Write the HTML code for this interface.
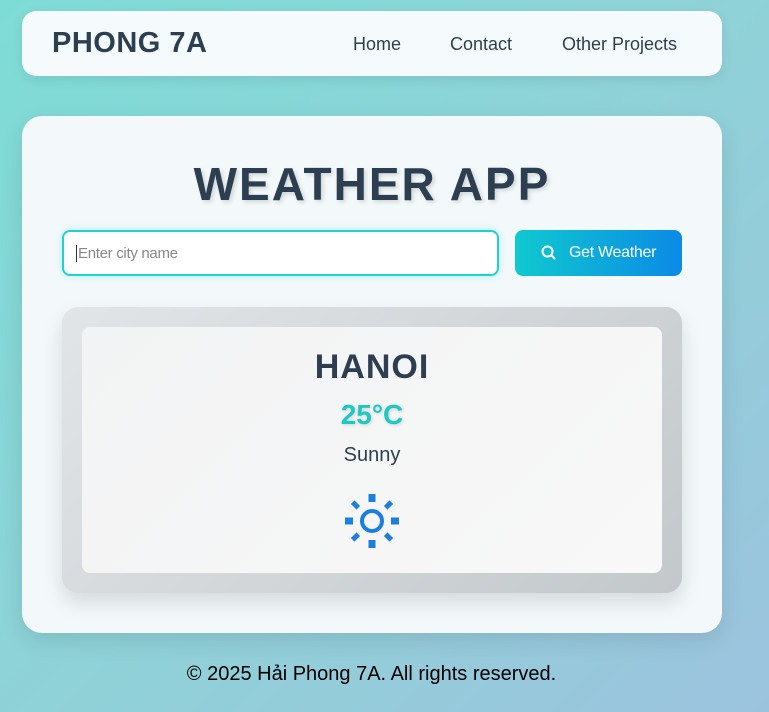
<!DOCTYPE html>
<html><head><meta charset="utf-8"><style>
*{box-sizing:border-box;margin:0;padding:0}
body{width:769px;height:712px;overflow:hidden;font-family:"Liberation Sans",Arial,sans-serif;background:linear-gradient(135deg,#7edcd6 0%,#8fd2d8 50%,#9cc3de 100%);position:relative}
.hdr{position:absolute;left:22px;top:11px;width:700px;height:65px;background:#f5fbfc;border-radius:14px;box-shadow:0 4px 12px rgba(0,0,0,.08)}
.logo{position:absolute;left:30px;top:16px;font-size:29px;font-weight:bold;color:#2c3e50;letter-spacing:.5px}
.nav{position:absolute;top:23px;font-size:18px;color:#2c3e50}
.card{position:absolute;left:22px;top:116px;width:700px;height:517px;background:#f3f9fb;border-radius:20px;box-shadow:0 8px 24px rgba(0,0,0,.1)}
h1{position:absolute;left:0;width:700px;top:41px;text-align:center;font-size:46px;font-weight:bold;color:#2c3e50;letter-spacing:2px;text-shadow:2px 2px 4px rgba(0,0,0,.15)}
.inp{position:absolute;left:40px;top:114px;width:437px;height:46px;border:2px solid #1dd3cf;border-radius:8px;background:#fff;box-shadow:0 0 8px rgba(29,211,207,.3)}
.inp span{position:absolute;left:12px;top:13px;font-size:15px;color:#888;border-left:1px solid #333;padding-left:1px;letter-spacing:-.3px}
.btn{position:absolute;left:493px;top:114px;width:167px;height:46px;border-radius:8px;background:linear-gradient(90deg,#10c9cf,#0b8ae6);color:#fff;font-size:16px}
.btn svg{position:absolute;left:26px;top:15px}
.btn span{position:absolute;left:54px;top:14px;letter-spacing:-.3px}
.res{position:absolute;left:40px;top:191px;width:620px;height:286px;border-radius:16px;background:linear-gradient(135deg,#e2e5e8,#c3c8cb);box-shadow:0 10px 20px rgba(0,0,0,.12)}
.in{position:absolute;left:20px;top:20px;width:580px;height:246px;border-radius:8px;background:linear-gradient(135deg,#f2f3f4,#f8f8f8)}
.c{position:absolute;left:0;width:580px;text-align:center}
.ft{position:absolute;left:0;width:743px;top:663px;text-align:center;font-size:20px;color:#000}
</style></head><body>
<div class="hdr"><div class="logo">PHONG 7A</div>
<div class="nav" style="left:331px">Home</div>
<div class="nav" style="left:428px">Contact</div>
<div class="nav" style="left:540px">Other Projects</div></div>
<div class="card"><h1>WEATHER APP</h1>
<div class="inp"><span>Enter city name</span></div>
<div class="btn"><svg width="16" height="16" viewBox="0 0 16 16"><circle cx="6.5" cy="6.5" r="5" fill="none" stroke="#fff" stroke-width="2"/><line x1="10" y1="10" x2="14" y2="14" stroke="#fff" stroke-width="2"/></svg><span>Get Weather</span></div>
<div class="res"><div class="in">
<div class="c" style="top:21px;font-size:34px;font-weight:bold;color:#2c3e50;letter-spacing:1px">HANOI</div>
<div class="c" style="top:72px;font-size:28px;font-weight:bold;color:#1ec9c4;text-shadow:1px 1px 3px rgba(0,0,0,.15)">25°C</div>
<div class="c" style="top:117px;font-size:20px;color:#2c3e50">Sunny</div>
<svg style="position:absolute;left:262px;top:166px" width="56" height="56" viewBox="0 0 56 56" fill="#1a7fe0" stroke="none">
<circle cx="28" cy="28" r="10" fill="none" stroke="#1a7fe0" stroke-width="4"/>
<rect x="24.5" y="1" width="7" height="8"/><rect x="24.5" y="47" width="7" height="8"/>
<rect x="1" y="24.5" width="8" height="7"/><rect x="47" y="24.5" width="8" height="7"/>
<rect x="7.5" y="9.5" width="8" height="5" transform="rotate(45 11.5 12)"/>
<rect x="40.5" y="9.5" width="8" height="5" transform="rotate(-45 44.5 12)"/>
<rect x="7.5" y="41.5" width="8" height="5" transform="rotate(-45 11.5 44)"/>
<rect x="40.5" y="41.5" width="8" height="5" transform="rotate(45 44.5 44)"/>
</svg>
</div></div></div>
<div class="ft">© 2025 Hải Phong 7A. All rights reserved.</div>
</body></html>
